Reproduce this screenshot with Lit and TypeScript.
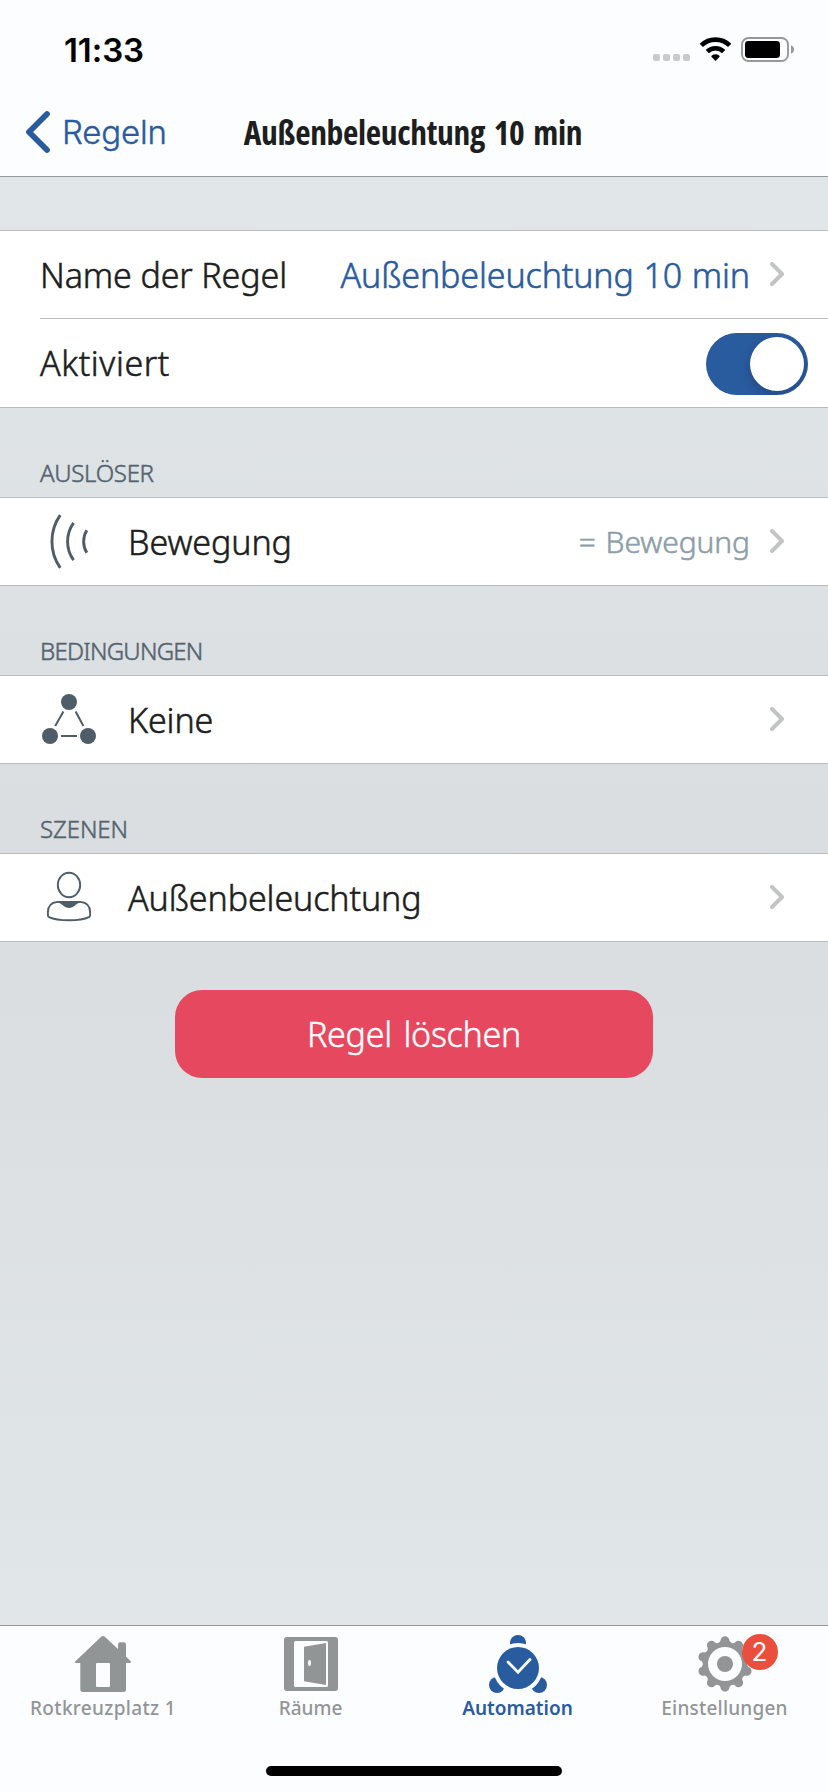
import { LitElement, html, svg, css, nothing, TemplateResult } from "lit";
import { customElement, property } from "lit/decorators.js";

/** Builds the outline of a cog whose teeth are round bumps joined by shallow arcs. */
function cogPath(teeth: number, radius: number, half: number): string {
  const parts: string[] = [];
  for (let i = 0; i < teeth; i++) {
    const a = (i * 2 * Math.PI) / teeth - Math.PI / 2;
    const d = Math.asin(half / radius);
    const at = (t: number) =>
      `${(28 + radius * Math.cos(t)).toFixed(2)} ${(28 + radius * Math.sin(t)).toFixed(2)}`;
    parts.push(i === 0 ? `M${at(a - d)}` : `A3.9 3.9 0 0 0 ${at(a - d)}`);
    parts.push(`A${half} ${half} 0 0 1 ${at(a + d)}`);
    if (i === teeth - 1) parts.push(`A3.9 3.9 0 0 0 ${at(-Math.PI / 2 - d)}Z`);
  }
  return parts.join("");
}

const motionIcon = html`<svg width="56" height="56" viewBox="0 0 56 56" fill="none" stroke="#4f5d69" stroke-width="2.9">
  <path d="M20.2 1.2A46 46 0 0 0 20.2 53.8M33.6 8.8A32 32 0 0 0 33.6 46.2M46.8 16.2A21.7 21.7 0 0 0 46.8 38.8" />
</svg>`;

const nodesIcon = html`<svg width="56" height="56" viewBox="0 0 56 56" fill="#4f5d69" stroke="#4f5d69">
  <g stroke="none"><circle cx="29" cy="10" r="8" /><circle cx="10" cy="44" r="8" /><circle cx="48" cy="44" r="8" /></g>
  <path d="M23.4 19.6L15.2 34M35.6 19.6L43.4 34M21 44H37" stroke-width="2" />
</svg>`;

const personIcon = html`<svg width="56" height="56" viewBox="0 0 56 56" fill="none" stroke="#4f5d69" stroke-width="1.9">
  <ellipse cx="29" cy="15" rx="11.2" ry="12.2" />
  <path d="M20 31.9H17.5C11.5 32.5 7.9 36.2 7.9 42.2V45.6C7.9 46.3 8.2 46.7 9 47.1C14 49.5 21 50.3 29 50.3S44 49.5 49 47.1C49.8 46.7 50.1 46.3 50.1 45.6V42.2C50.1 36.2 46.5 32.5 40.5 31.9H38" />
  <path d="M17.5 30.9H40.5V32.4C37.5 33 36.6 34 35 35.5C31.5 38.7 26.5 38.7 23 35.5C21.4 34 20.5 33 17.5 32.4Z" fill="#4f5d69" stroke="none" />
</svg>`;

const homeIcon = html`<svg width="56" height="56" viewBox="0 0 56 56" fill="#919596">
  <path fill-rule="evenodd" d="M28 0C28.6 0 29.2 .2 29.8 .8L43 13V8.5Q43 6.2 45.3 6.2H48.7Q51 6.2 51 8.5V20.6L55.6 25.2Q57 26.6 55 26.9H51V53.5Q51 56 48.5 56H8Q5.3 56 5.3 53.5V26.9H1Q-.8 26.6 .4 25.2L26.2 .8C26.8 .2 27.4 0 28 0ZM22 27Q21 27 21 28V50Q21 51 22 51H34Q35 51 35 50V28Q35 27 34 27Z" />
</svg>`;

const doorIcon = html`<svg width="56" height="56" viewBox="0 0 56 56" fill="#919596">
  <path fill-rule="evenodd" d="M4 1H52Q55 1 55 4V52Q55 55 52 55H4Q1 55 1 52V4Q1 1 4 1ZM12.5 5Q11 5 11 6.5V49.5Q11 51 12.5 51H43.5Q45 51 45 49.5V6.5Q45 5 43.5 5Z" />
  <path fill-rule="evenodd" d="M21 10.7L43 7V49L21 45.2ZM26.5 24Q25 24 25 27Q25 30 26.5 30Q28 30 28 27Q28 24 26.5 24Z" />
</svg>`;

const automationIcon = html`<svg width="58" height="58" viewBox="0 0 58 58">
  <g fill="#295b9f"><circle cx="29" cy="8" r="8" /><circle cx="8" cy="50" r="8" /><circle cx="50" cy="50" r="8" /></g>
  <circle cx="29" cy="33" r="25" fill="#fcfdff" />
  <circle cx="29" cy="33" r="21" fill="#295b9f" />
  <path d="M19 27L29 37.2L41 24.5" fill="none" stroke="#fcfdff" stroke-width="2.8" stroke-linecap="round" />
</svg>`;

const gearIcon = html`<svg width="56" height="56" viewBox="0 0 56 56">
  <path d=${cogPath(10, 23.6, 4.5)} fill="#919596" />
  <circle cx="28" cy="28" r="17" fill="#fcfdff" />
  <circle cx="28" cy="28" r="8" fill="#919596" />
</svg>`;

const chevron = html`<svg width="14" height="25" viewBox="0 0 14 25" fill="none" stroke="#c3c4c6" stroke-width="4" stroke-linecap="round" stroke-linejoin="round">
  <path d="M2 2L12 12L2 22" />
</svg>`;

@customElement("status-bar")
export class StatusBar extends LitElement {
  static styles = css`
    :host {
      display: flex;
      justify-content: space-between;
      height: 88px;
      padding: 0 34px 0 64px;
      box-sizing: border-box;
    }
    .time {
      font: 600 33px/40px Inter, "Liberation Sans", sans-serif;
      color: #000;
      padding-top: 30px;
      letter-spacing: -0.1px;
    }
    .signals { padding-top: 36px; }
    svg { display: block; }
  `;
  render() {
    return html`
      <span class="time">11:33</span>
      <svg class="signals" width="142" height="28" viewBox="0 0 142 28">
        ${[1, 11, 21, 31].map((x) => svg`<rect x=${x} y="18" width="7" height="7" rx="2" fill="#c9cacc" />`)}
        <g fill="none" stroke="#000" stroke-width="4.6">
          <path d="M49.3 9.4A20.3 20.3 0 0 1 77.7 9.4" />
          <path d="M55.3 15.6A11.8 11.8 0 0 1 71.7 15.6" />
        </g>
        <path d="M63.5 25L59.6 21Q58.9 20.2 59.8 19.6Q63.5 17 67.2 19.6Q68.1 20.2 67.4 21Z" />
        <rect x="90" y="2" width="46" height="23" rx="6.5" fill="none" stroke="#97989a" stroke-width="1.9" />
        <rect x="93" y="5" width="35" height="17" rx="3.4" />
        <path d="M139 9.2Q142 10.5 142 13.5T139 17.8Z" fill="#97989a" />
      </svg>
    `;
  }
}

@customElement("nav-bar")
export class NavBar extends LitElement {
  static styles = css`
    :host {
      display: grid;
      grid-template-columns: 1fr auto 1fr;
      align-items: center;
      height: 88px;
    }
    .back {
      display: flex;
      align-items: center;
      gap: 11px;
      padding-left: 25px;
      font: 300 33px/42px Inter, "Liberation Sans", sans-serif;
      letter-spacing: -0.15px;
      color: #295b9f;
      -webkit-text-stroke: 0.4px #295b9f;
    }
    .title {
      font: 700 33.5px/46px "Open Sans", "Noto Sans", sans-serif;
      font-stretch: 75%;
      letter-spacing: -0.32px;
      word-spacing: 3px;
      color: #1c1e20;
      margin: 0;
      padding-right: 2px;
    }
  `;
  render() {
    return html`
      <div class="back">
        <svg width="26" height="44" viewBox="0 0 26 44" fill="none" stroke="#295b9f" stroke-width="5.8" stroke-linecap="round" stroke-linejoin="round">
          <path d="M22 4L4 22L22 40" />
        </svg>
        <span>Regeln</span>
      </div>
      <h1 class="title">Außenbeleuchtung 10 min</h1>
      <span></span>
    `;
  }
}

@customElement("setting-row")
export class SettingRow extends LitElement {
  @property() label = "";
  @property() value = "";
  @property() tone = "muted";
  @property({ attribute: false }) icon?: TemplateResult;
  @property({ type: Boolean }) toggle = false;

  static styles = css`
    :host {
      display: flex;
      align-items: center;
      height: 87px;
      box-sizing: border-box;
      padding: 0 44px 0 40px;
      background: #fff;
      font: 300 34px/46px "Noto Sans", sans-serif;
      color: #1c1e20;
      -webkit-text-stroke: 0.55px currentColor;
      white-space: nowrap;
    }
    :host([toggle]) { height: 88px; padding-right: 20px; }
    .icon { display: flex; width: 56px; margin-right: 32px; }
    .label { flex: 1; letter-spacing: var(--tracking, -0.1px); }
    .value { margin-right: 20px; }
    .muted { font-size: 30px; color: #8c9ea8; letter-spacing: -0.1px; word-spacing: 2px; }
    .accent { color: #295b9f; letter-spacing: -0.12px; word-spacing: 1px; }
    .switch {
      display: flex;
      justify-content: flex-end;
      width: 102px;
      height: 62px;
      margin-top: 2px;
      padding: 4px;
      box-sizing: border-box;
      border-radius: 31px;
      background: #295b9f;
      overflow: hidden;
    }
    .knob {
      width: 54px;
      height: 54px;
      border-radius: 50%;
      background: #fff;
      box-shadow: 0 4px 12px rgba(0, 0, 0, 0.18);
    }
  `;
  render() {
    return html`
      ${this.icon ? html`<span class="icon">${this.icon}</span>` : nothing}
      <span class="label">${this.label}</span>
      ${this.value ? html`<span class="value ${this.tone}">${this.value}</span>` : nothing}
      ${this.toggle ? html`<span class="switch"><span class="knob"></span></span>` : chevron}
    `;
  }
}

@customElement("tab-item")
export class TabItem extends LitElement {
  @property() label = "";
  @property() badge = "";
  @property({ type: Boolean }) active = false;
  @property({ attribute: false }) icon?: TemplateResult;

  static styles = css`
    :host {
      display: flex;
      flex-direction: column;
      align-items: center;
      font: 500 19px/26px "Noto Sans", sans-serif;
      color: #929597;
      padding-top: 9px;
    }
    :host([active]) { color: #295b9f; font-weight: 600; }
    .icon { position: relative; display: flex; align-items: center; justify-content: center; height: 58px; }
    .label { margin-top: 2px; letter-spacing: var(--tracking, 0); }
    .badge {
      position: absolute;
      left: 45px;
      top: -1px;
      width: 36px;
      height: 36px;
      border-radius: 50%;
      background: #ea4f3d;
      color: #fff;
      font: 400 26px/36px Inter, "Liberation Sans", sans-serif;
      text-align: center;
    }
  `;
  render() {
    return html`
      <span class="icon">${this.icon}${this.badge ? html`<span class="badge">${this.badge}</span>` : nothing}</span>
      <span class="label">${this.label}</span>
    `;
  }
}

@customElement("app-root")
export class AppRoot extends LitElement {
  static styles = css`
    :host {
      display: flex;
      flex-direction: column;
      width: 828px;
      height: 1792px;
      overflow: hidden;
      background: #fcfdff;
    }
    .top { border-bottom: 1px solid #97999c; }
    .content {
      flex: 1;
      display: flex;
      flex-direction: column;
      padding-top: 53px;
      background: linear-gradient(#e1e6e9, #d9dde0 50%, #e1e6e9);
    }
    .group {
      border: solid #b9bcbf;
      border-width: 1px 0;
      background: #fff;
    }
    .separator { height: 1px; margin-left: 40px; background: #b9bcbf; }
    .heading {
      display: flex;
      align-items: flex-end;
      height: 89px;
      box-sizing: border-box;
      margin: 0;
      padding: 0 40px 8px;
      font: 300 24px/32px "Noto Sans", sans-serif;
      color: #54636f;
      -webkit-text-stroke: 0.5px currentColor;
      letter-spacing: -0.3px;
    }
    .tight { letter-spacing: -0.75px; }
    .last { letter-spacing: -0.1px; }
    .even { --tracking: -0.12px; }
    .wide { --tracking: 0.6px; }
    .delete {
      align-self: center;
      width: 478px;
      height: 88px;
      margin: 48px 0 0;
      padding: 0 0 1px;
      border: 0;
      border-radius: 27px;
      background: #e6495f;
      color: #fff;
      font: 300 34px/46px "Noto Sans", sans-serif;
      -webkit-text-stroke: 0.45px #fff;
      letter-spacing: -0.25px;
      word-spacing: 3px;
    }
    .tabs {
      display: grid;
      grid-template-columns: repeat(4, 1fr);
      height: 140px;
      border-top: 1px solid #97999c;
    }
    .tabs .home { --tracking: 0.33px; padding-right: 1px; }
    .tabs .settings { --tracking: 0.2px; }
    .indicator { width: 296px; height: 10px; margin: 0 auto 16px; border-radius: 5px; background: #000; }
  `;
  render() {
    return html`
      <header class="top">
        <status-bar></status-bar>
        <nav-bar></nav-bar>
      </header>
      <main class="content">
        <section class="group">
          <setting-row class="even" label="Name der Regel" value="Außenbeleuchtung 10 min" tone="accent"></setting-row>
          <div class="separator"></div>
          <setting-row class="wide" label="Aktiviert" toggle></setting-row>
        </section>
        <h2 class="heading">AUSLÖSER</h2>
        <section class="group">
          <setting-row .icon=${motionIcon} label="Bewegung" value="= Bewegung"></setting-row>
        </section>
        <h2 class="heading tight">BEDINGUNGEN</h2>
        <section class="group">
          <setting-row .icon=${nodesIcon} label="Keine"></setting-row>
        </section>
        <h2 class="heading last">SZENEN</h2>
        <section class="group">
          <setting-row .icon=${personIcon} label="Außenbeleuchtung"></setting-row>
        </section>
        <button class="delete">Regel löschen</button>
      </main>
      <nav class="tabs">
        <tab-item class="home" .icon=${homeIcon} label="Rotkreuzplatz 1"></tab-item>
        <tab-item .icon=${doorIcon} label="Räume"></tab-item>
        <tab-item .icon=${automationIcon} label="Automation" active></tab-item>
        <tab-item class="settings" .icon=${gearIcon} label="Einstellungen" badge="2"></tab-item>
      </nav>
      <div class="indicator"></div>
    `;
  }
}
